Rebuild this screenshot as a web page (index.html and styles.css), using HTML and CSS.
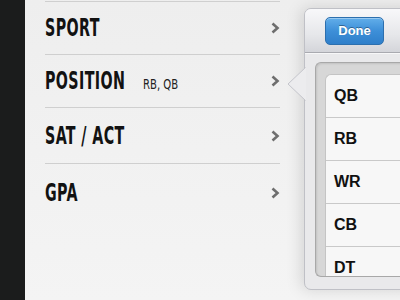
FILE: index.html
```html
<!DOCTYPE html>
<html>
<head>
<meta charset="utf-8">
<link rel="stylesheet" href="styles.css">
</head>
<body>
<div class="screen">
  <div class="sidebar"></div>
  <div class="main">
    <ul class="menu">
      <li class="row"><span class="label">SPORT</span><svg class="chev" width="9" height="12" viewBox="0 0 9 12"><polyline points="1.5,1.5 6.5,6 1.5,10.5"/></svg></li>
      <li class="row"><span class="label">POSITION</span><span class="value">RB, QB</span><svg class="chev" width="9" height="12" viewBox="0 0 9 12"><polyline points="1.5,1.5 6.5,6 1.5,10.5"/></svg></li>
      <li class="row tall"><span class="label">SAT / ACT</span><svg class="chev" width="9" height="12" viewBox="0 0 9 12"><polyline points="1.5,1.5 6.5,6 1.5,10.5"/></svg></li>
      <li class="row taller"><span class="label">GPA</span><svg class="chev" width="9" height="12" viewBox="0 0 9 12"><polyline points="1.5,1.5 6.5,6 1.5,10.5"/></svg></li>
    </ul>
  </div>
  <div class="popover">
    <svg class="arrow" width="19" height="34" viewBox="0 0 19 34">
      <polygon class="arrow-fill" points="19,0 1,17 19,34"/>
      <polyline class="arrow-line" points="18.5,0.5 1,17 18.5,33.5"/>
    </svg>
    <div class="pop-header"><button class="done">Done</button></div>
    <div class="pop-body">
      <div class="panel">
        <ul class="options">
          <li class="opt">QB</li>
          <li class="opt">RB</li>
          <li class="opt">WR</li>
          <li class="opt">CB</li>
          <li class="opt">DT</li>
        </ul>
      </div>
    </div>
  </div>
</div>
</body>
</html>
```
FILE: styles.css
```css
html, body {
  margin: 0;
  padding: 0;
  width: 400px;
  height: 300px;
  overflow: hidden;
}
.screen {
  position: relative;
  display: flex;
  width: 400px;
  height: 300px;
  overflow: hidden;
  background: #f1f1f1;
}
.sidebar {
  width: 25px;
  flex: none;
  background: #1b1c1c;
}
.main {
  flex: 1;
  background: linear-gradient(#eeeeee, #f4f4f4);
}
.menu {
  list-style: none;
  margin: 0;
  padding: 1px 0 0 20px;
  width: 235px;
}
.row {
  display: flex;
  align-items: center;
  height: 52px;
  border-top: 1px solid #cfcfcf;
}
.row.tall { height: 55px; }
.row.taller { height: 57px; }
.label {
  display: inline-block;
  font-family: "DejaVu Sans Condensed", "DejaVu Sans", sans-serif;
  font-weight: bold;
  font-size: 24px;
  color: #121212;
  transform: scaleX(0.66);
  transform-origin: left center;
  letter-spacing: 0.6px;
  white-space: nowrap;
}
.value {
  display: inline-block;
  font-family: "DejaVu Sans Condensed", "DejaVu Sans", sans-serif;
  font-size: 14px;
  color: #222;
  margin-left: -24px;
  margin-top: 5px;
  transform: scaleX(0.8);
  transform-origin: left center;
  white-space: nowrap;
}
.chev {
  margin-left: auto;
}
.chev polyline {
  fill: none;
  stroke: #6e6e6e;
  stroke-width: 2.6;
}
.popover {
  position: absolute;
  left: 304px;
  top: 8px;
  width: 130px;
  height: 280px;
  border: 1px solid #bfc0c6;
  border-radius: 7px;
  background: #e9e9eb;
  box-shadow: -3px 0 16px rgba(0,0,0,0.13);
  display: flex;
  flex-direction: column;
}
.arrow {
  position: absolute;
  left: -18px;
  top: 58px;
}
.arrow-fill { fill: #ececee; }
.arrow-line { fill: none; stroke: #c4c5cb; stroke-width: 1; }
.pop-header {
  height: 43px;
  flex: none;
  border-radius: 6px 0 0 0;
  background: linear-gradient(#f8f8fa, #e6e7ea 60%, #d4d5da);
  border-bottom: 1px solid #a9aab0;
  box-shadow: 0 1px 0 #f7f7f8;
  display: flex;
  align-items: center;
  padding-left: 20px;
}
.done {
  width: 59px;
  height: 28px;
  border: 1px solid #2c6fae;
  border-radius: 5px;
  background: linear-gradient(#62aeea, #3d8fd8 50%, #2f7fca);
  color: #fff;
  font-family: "Liberation Sans", Arial, sans-serif;
  font-weight: bold;
  font-size: 13px;
  text-shadow: 0 -1px 0 rgba(0,0,0,0.35);
  box-shadow: inset 0 1px 0 rgba(255,255,255,0.35);
  padding: 0;
}
.pop-body {
  flex: 1;
  min-height: 0;
  padding: 9px 0 12px 10px;
  display: flex;
}
.panel {
  flex: 1;
  min-height: 0;
  border: 1px solid #a8a8a8;
  border-right: none;
  border-radius: 6px 0 0 6px;
  background: #d7d7d7;
  padding: 11px 0 0 9px;
  overflow: hidden;
  box-shadow: inset 1px 1px 2px rgba(0,0,0,0.1);
}
.options {
  list-style: none;
  margin: 0;
  padding: 0;
  background: #f7f7f7;
  border-radius: 6px 0 0 0;
  border-left: 1px solid #c4c4c4;
  border-top: 1px solid #c4c4c4;
}
.opt {
  height: 42px;
  border-bottom: 1px solid #c9c9c9;
  display: flex;
  align-items: center;
  padding-left: 8px;
  font-family: "Liberation Sans", Arial, sans-serif;
  font-weight: bold;
  font-size: 16px;
  color: #111;
}
```
